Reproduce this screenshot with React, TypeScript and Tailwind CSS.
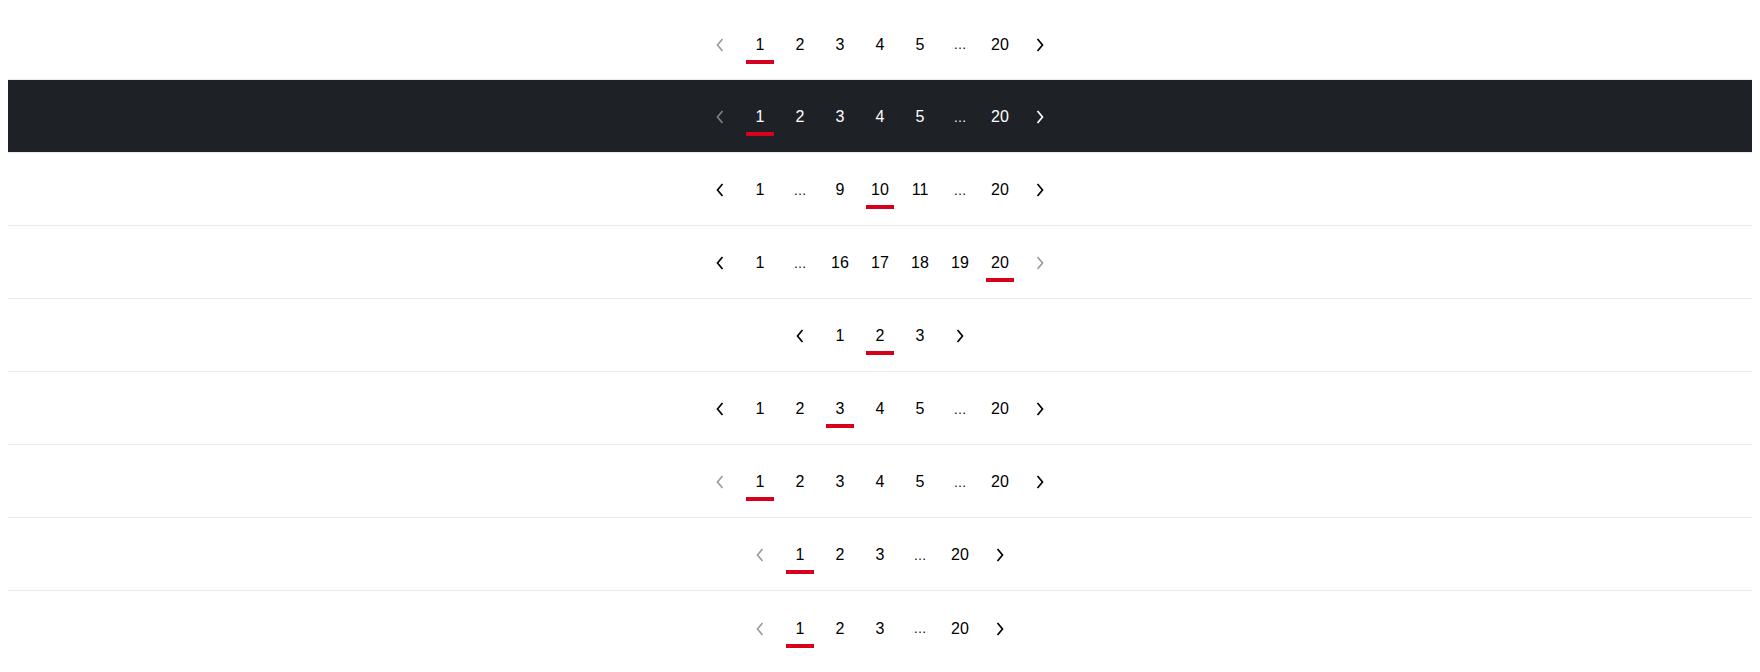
type Item = { label: string; active?: boolean; disabled?: boolean; kind?: "prev" | "next" | "page" | "dots" };

function Chevron({ dir, disabled, dark }: { dir: "prev" | "next"; disabled?: boolean; dark?: boolean }) {
  const color = disabled ? (dark ? "#7e8184" : "#9a9c9e") : dark ? "#ffffff" : "#000000";
  return (
    <svg width="8" height="14" viewBox="0 0 8 14" fill="none">
      <path
        d={dir === "prev" ? "M6.5 1 L1.5 7 L6.5 13" : "M1.5 1 L6.5 7 L1.5 13"}
        stroke={color}
        strokeWidth="1.7"
        strokeLinejoin="miter"
      />
    </svg>
  );
}

function Pagination({ items, dark }: { items: Item[]; dark?: boolean }) {
  return (
    <div className="flex items-center justify-center">
      {items.map((it, i) => (
        <div key={i} className="relative flex h-10 w-10 items-center justify-center pt-[2px]">
          {it.kind === "prev" || it.kind === "next" ? (
            <Chevron dir={it.kind} disabled={it.disabled} dark={dark} />
          ) : (
            <span
              className={`leading-none ${it.kind === "dots" ? "text-[13px]" : "text-[16px]"} ${dark ? "text-white" : "text-black"}`}
            >
              {it.label}
            </span>
          )}
          {it.active && <span className="absolute bottom-0 left-[6px] h-1 w-7 bg-[#d5001c]" />}
        </div>
      ))}
    </div>
  );
}

const prev = (disabled?: boolean): Item => ({ label: "", kind: "prev", disabled });
const next = (disabled?: boolean): Item => ({ label: "", kind: "next", disabled });
const p = (label: string, active?: boolean): Item => ({ label, active, kind: "page" });
const dots: Item = { label: "…", kind: "dots" };

const first: Item[] = [prev(true), p("1", true), p("2"), p("3"), p("4"), p("5"), dots, p("20"), next()];

const rows: { items: Item[]; dark?: boolean }[] = [
  { items: first },
  { items: first, dark: true },
  { items: [prev(), p("1"), dots, p("9"), p("10", true), p("11"), dots, p("20"), next()] },
  { items: [prev(), p("1"), dots, p("16"), p("17"), p("18"), p("19"), p("20", true), next(true)] },
  { items: [prev(), p("1"), p("2", true), p("3"), next()] },
  { items: [prev(), p("1"), p("2"), p("3", true), p("4"), p("5"), dots, p("20"), next()] },
  { items: first },
  { items: [prev(true), p("1", true), p("2"), p("3"), dots, p("20"), next()] },
  { items: [prev(true), p("1", true), p("2"), p("3"), dots, p("20"), next()] },
];

export default function App() {
  return (
    <div className="min-h-screen bg-white p-2" style={{ fontFamily: "'Liberation Sans', Arial, sans-serif" }}>
      <div className="divide-y divide-[#e8e9ea]">
        {rows.map((r, i) => (
          <div
            key={i}
            className={`flex items-center justify-center ${i === 0 ? "h-[72px]" : "h-[73px]"} ${r.dark ? "bg-[#1e2226]" : "bg-white"}`}
          >
            <Pagination items={r.items} dark={r.dark} />
          </div>
        ))}
      </div>
    </div>
  );
}
